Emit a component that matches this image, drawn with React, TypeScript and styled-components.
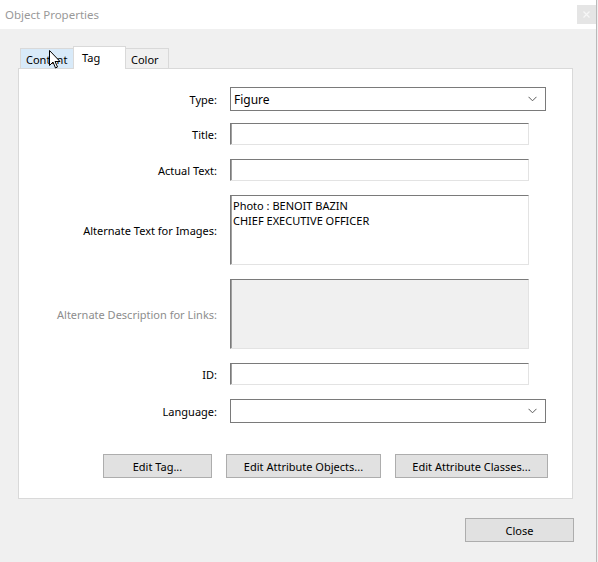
import React from "react";
import styled, { createGlobalStyle } from "styled-components";

const Global = createGlobalStyle`
  html, body {
    margin: 0;
    padding: 0;
    background: #f0f0f0;
  }
  * {
    box-sizing: border-box;
  }
`;

const Dialog = styled.div`
  position: relative;
  width: 597px;
  height: 562px;
  background: #f0f0f0;
  border-right: 1px solid #b9b9b9;
  font-family: "Noto Sans", "Open Sans", sans-serif;
  font-size: 11px;
  color: #000;
  display: flex;
  flex-direction: column;
  overflow: hidden;
`;

const TitleBar = styled.div`
  height: 29px;
  background: #fff;
  display: flex;
  align-items: center;
  justify-content: space-between;
  padding-left: 5px;
  color: #999;
  font-size: 11.5px;
`;

const CloseX = styled.div`
  width: 19px;
  height: 19px;
  background: #e5e5e5;
  display: flex;
  align-items: center;
  justify-content: center;
  svg {
    width: 7px;
    height: 7px;
  }
`;

const Body = styled.div`
  flex: 1;
  padding: 17px 0 0 18px;
  display: flex;
  flex-direction: column;
`;

const Tabs = styled.div`
  display: flex;
  align-items: flex-end;
  padding-left: 2px;
  height: 23px;
  position: relative;
  z-index: 1;
  margin-bottom: -1px;
`;

const Tab = styled.div<{ $active?: boolean; $hover?: boolean; $w: number }>`
  width: ${(p) => p.$w}px;
  height: ${(p) => (p.$active ? 23 : 21)}px;
  padding: ${(p) => (p.$active ? "3px 0 0 8px" : "3px 0 0 5px")};
  background: ${(p) => (p.$active ? "#fff" : p.$hover ? "#d8eaf9" : "#f0f0f0")};
  border: 1px solid #d9d9d9;
  border-bottom: ${(p) => (p.$active ? "none" : "1px solid #d9d9d9")};
  margin-left: ${(p) => (p.$active ? "-1px" : "0")};
  margin-right: ${(p) => (p.$active ? "-1px" : "0")};
  position: relative;
  z-index: ${(p) => (p.$active ? 2 : 1)};
  line-height: 15px;
`;

const Panel = styled.div`
  width: 555px;
  height: 431px;
  background: #fff;
  border: 1px solid #d9d9d9;
  padding-top: 18px;
  display: flex;
  flex-direction: column;
`;

const Fields = styled.div`
  display: flex;
  flex-direction: column;
  gap: 14px;
`;

const Row = styled.div<{ $tight?: boolean }>`
  display: flex;
  align-items: center;
  margin-bottom: ${(p) => (p.$tight ? "-2px" : "0")};
`;

const Label = styled.div<{ $disabled?: boolean }>`
  width: 198px;
  margin-right: 13px;
  text-align: right;
  color: ${(p) => (p.$disabled ? "#8d8d8d" : "#000")};
  white-space: nowrap;
`;

const Select = styled.div`
  width: 316px;
  height: 24px;
  border: 1px solid #7a7a7a;
  background: #fff;
  display: flex;
  align-items: center;
  justify-content: space-between;
  padding: 0 8px 0 3px;
  font-size: 12px;
  svg {
    width: 9px;
    height: 6px;
  }
`;

const Input = styled.div<{ $h?: number; $disabled?: boolean }>`
  width: 299px;
  height: ${(p) => p.$h ?? 22}px;
  background: ${(p) => (p.$disabled ? "#f0f0f0" : "#fff")};
  border-top: 1px solid #7a7a7a;
  border-left: 1px solid #7a7a7a;
  border-right: 1px solid #e3e3e3;
  border-bottom: 1px solid #e3e3e3;
  box-shadow: inset 1px 0 0 #a0a0a0;
  padding: 2px 2px;
  line-height: 15px;
  color: #000;
  white-space: pre;
`;

const ButtonRow = styled.div`
  display: flex;
  gap: 14px;
  padding-left: 84px;
  margin-top: 31px;
`;

const Button = styled.div<{ $w: number }>`
  width: ${(p) => p.$w}px;
  height: 24px;
  background: #e1e1e1;
  border: 1px solid #adadad;
  display: flex;
  align-items: center;
  justify-content: center;
`;

const Footer = styled.div`
  display: flex;
  justify-content: flex-end;
  padding-top: 19px;
  padding-right: 22px;
`;

const Cursor = styled.svg`
  position: absolute;
  left: 49px;
  top: 50px;
  width: 12px;
  height: 19px;
  z-index: 5;
`;

const Chevron = () => (
  <svg viewBox="0 0 9 6">
    <path d="M0.5 0.8 L4.5 4.8 L8.5 0.8" fill="none" stroke="#5a5a5a" strokeWidth="1" />
  </svg>
);

export default function App() {
  return (
    <Dialog>
      <Global />
      <TitleBar>
        Object Properties
        <CloseX>
          <svg viewBox="0 0 7 7">
            <path d="M0.5 0.5 L6.5 6.5 M6.5 0.5 L0.5 6.5" stroke="#f7f7f7" strokeWidth="1.2" />
          </svg>
        </CloseX>
      </TitleBar>
      <Body>
        <Tabs>
          <Tab $hover $w={54}>Content</Tab>
          <Tab $active $w={53}>Tag</Tab>
          <Tab $w={44}>Color</Tab>
        </Tabs>
        <Panel>
          <Fields>
            <Row $tight>
              <Label>Type:</Label>
              <Select>
                Figure
                <Chevron />
              </Select>
            </Row>
            <Row>
              <Label>Title:</Label>
              <Input />
            </Row>
            <Row>
              <Label>Actual Text:</Label>
              <Input />
            </Row>
            <Row>
              <Label>Alternate Text for Images:</Label>
              <Input $h={70}>{"Photo : BENOIT BAZIN\nCHIEF EXECUTIVE OFFICER"}</Input>
            </Row>
            <Row>
              <Label $disabled>Alternate Description for Links:</Label>
              <Input $h={70} $disabled />
            </Row>
            <Row>
              <Label>ID:</Label>
              <Input />
            </Row>
            <Row>
              <Label>Language:</Label>
              <Select>
                <span />
                <Chevron />
              </Select>
            </Row>
          </Fields>
          <ButtonRow>
            <Button $w={109}>Edit Tag...</Button>
            <Button $w={155}>Edit Attribute Objects...</Button>
            <Button $w={153}>Edit Attribute Classes...</Button>
          </ButtonRow>
        </Panel>
        <Footer>
          <Button $w={109}>Close</Button>
        </Footer>
      </Body>
      <Cursor viewBox="0 0 12 19">
        <path
          d="M0.5 0.5 L0.5 15.5 L4 12 L6.5 18 L8.5 17 L6 11.5 L11 11.5 Z"
          fill="#fff"
          stroke="#000"
          strokeWidth="1"
          strokeLinejoin="miter"
        />
      </Cursor>
    </Dialog>
  );
}
